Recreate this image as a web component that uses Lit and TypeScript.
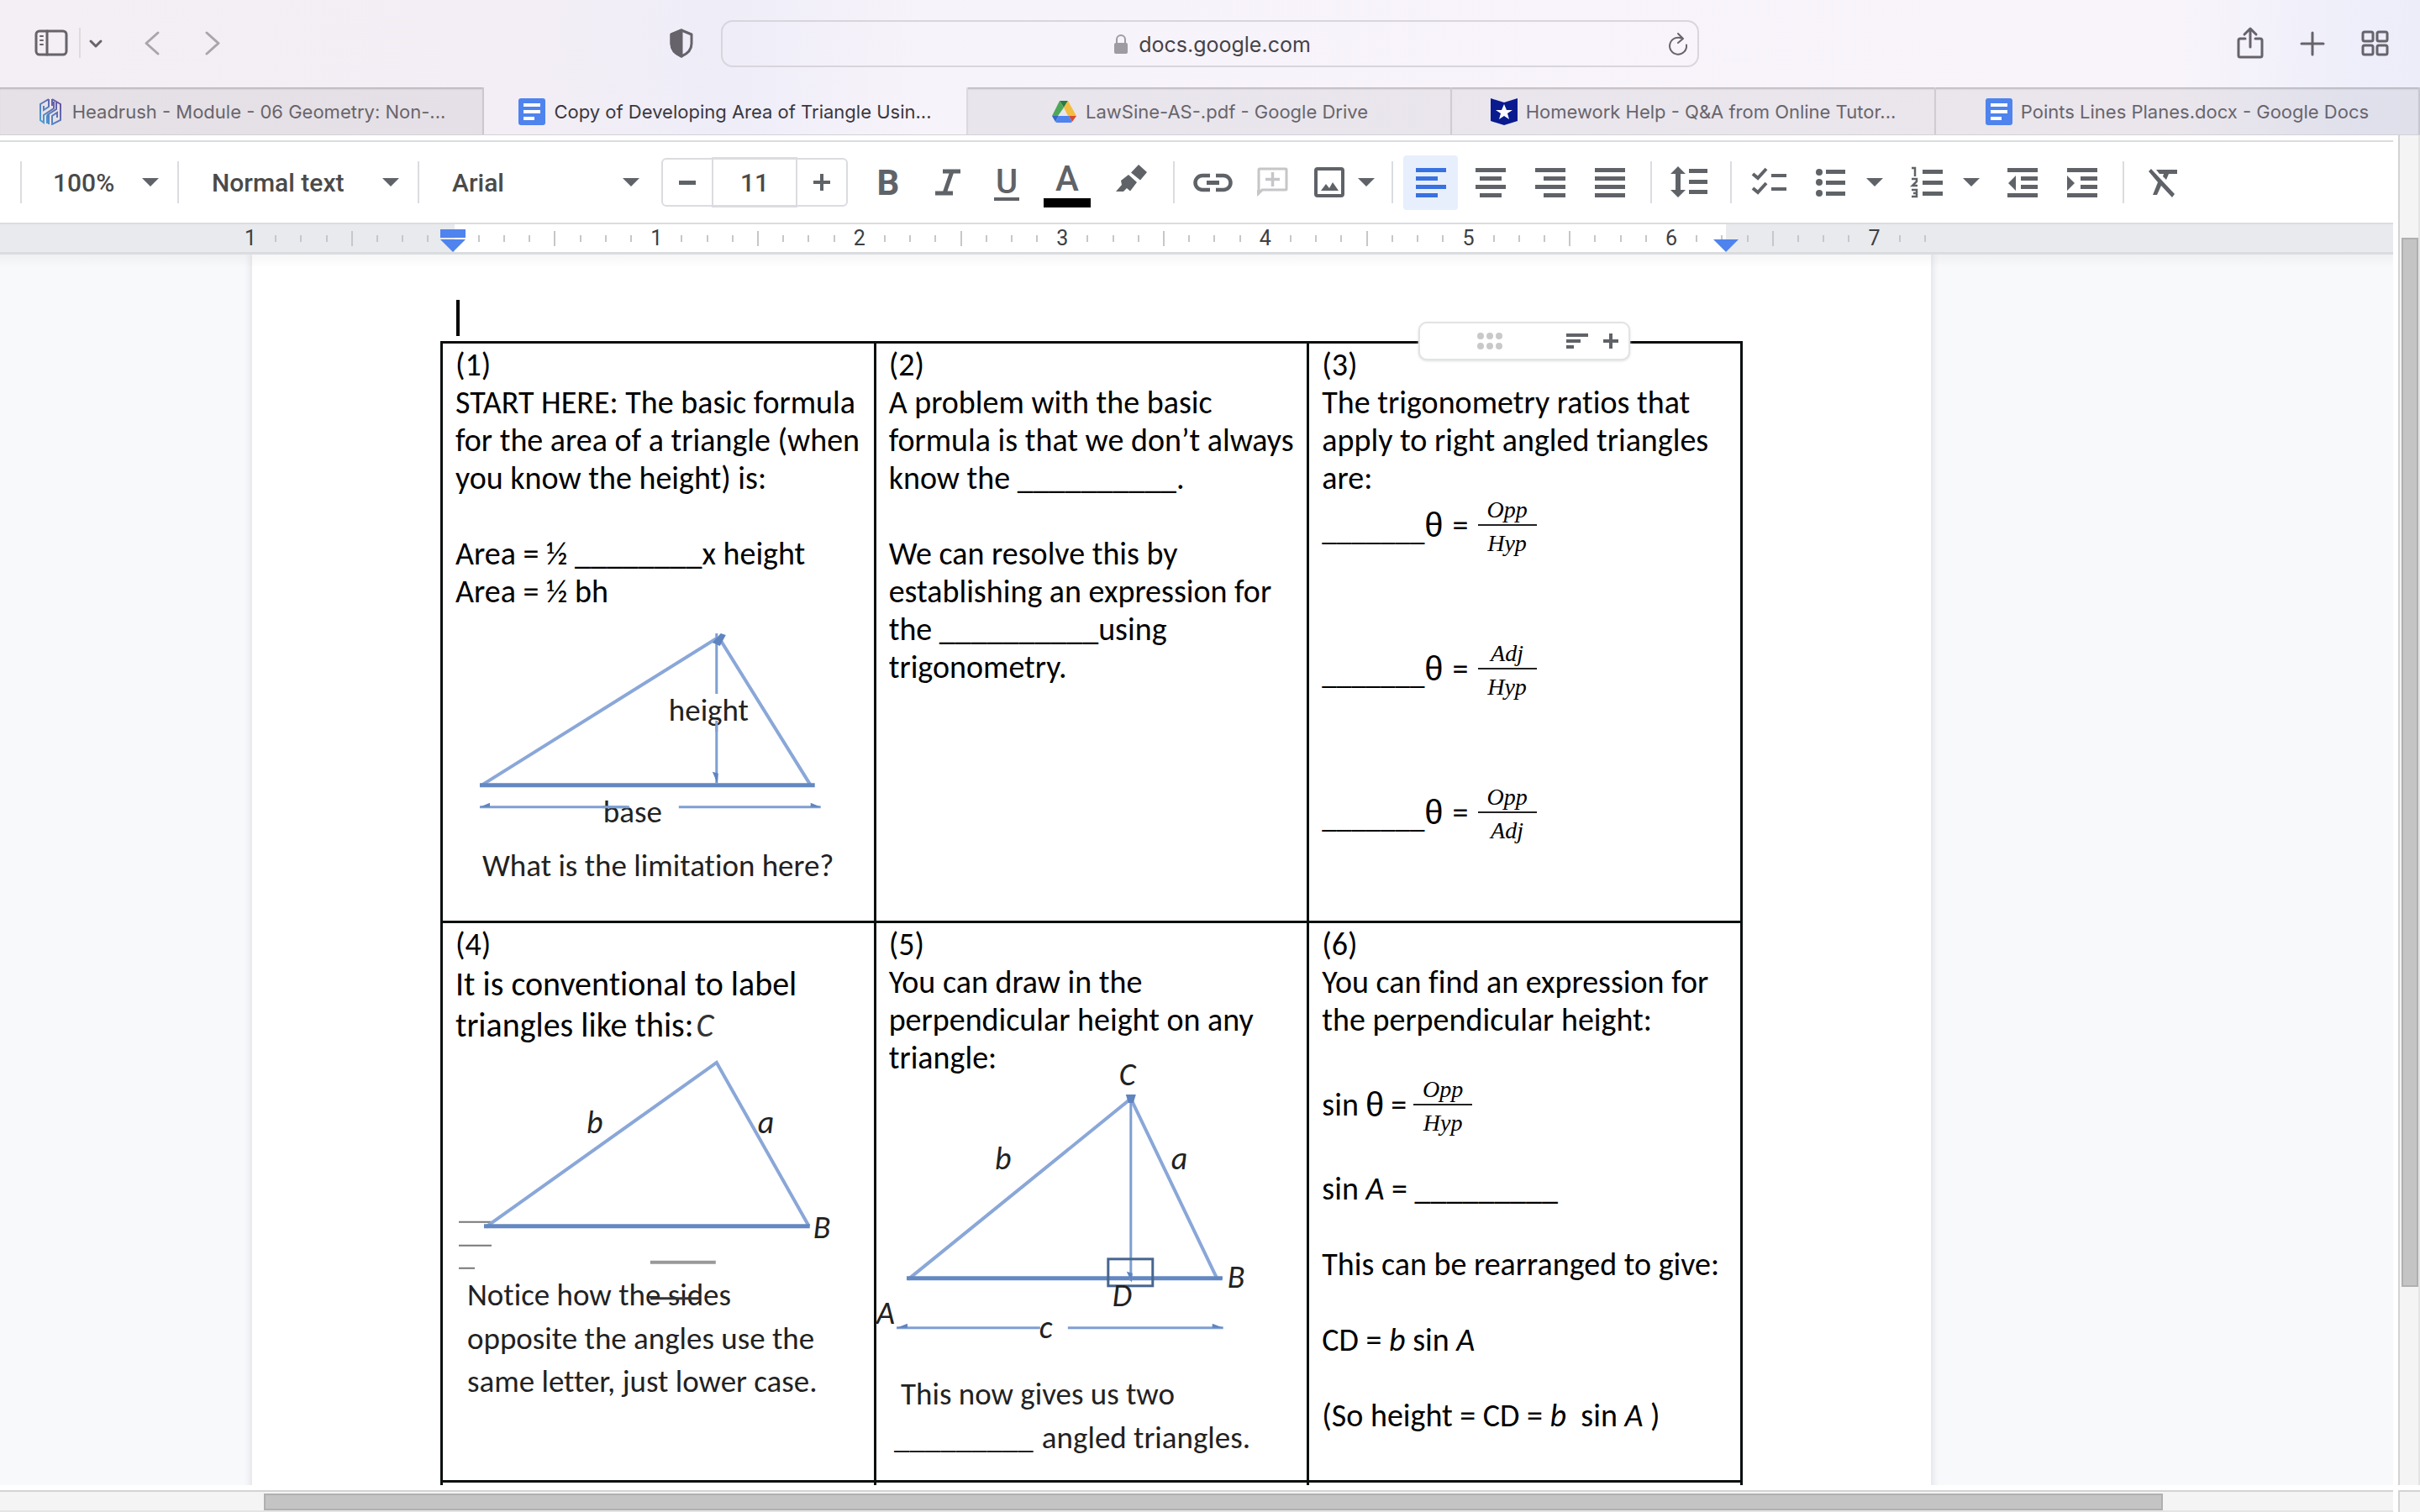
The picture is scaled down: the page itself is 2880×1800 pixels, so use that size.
import { LitElement, html, svg, css, nothing } from "lit";
import { customElement } from "lit/decorators.js";
import { classMap } from "lit/directives/class-map.js";

const docsIcon = svg`<rect width="32" height="32" rx="3" fill="#4f83ee"/><path d="M6 6h20v4H6zM6 14h20v4H6zM6 22h13v4H6z" fill="#fff"/>`;

const tabs = [
  {
    title: "Headrush - Module - 06 Geometry: Non-...",
    icon: svg`<defs><linearGradient id="hr" x1="1" y1="0" x2="0" y2="1"><stop offset="0" stop-color="#6a4c9c"/><stop offset="1" stop-color="#48a5dc"/></linearGradient></defs>
      <g fill="none" stroke="url(#hr)" stroke-width="2"><path d="M14 1L4 7V26L8 29V20L20 12V4M14 1V10L8 14V9M14 31V20L12 21V30M18 1V9M18 1L28 7V26L18 31V21L24 17V23M23 5V13L12 20"/></g>`,
  },
  { title: "Copy of Developing Area of Triangle Usin...", icon: docsIcon, active: true },
  {
    title: "LawSine-AS-.pdf - Google Drive",
    icon: svg`<path d="M11 3h10l-5 8z" fill="#2c7a3f"/><path d="M11 3l5 8-7 10H2z" fill="#4fa65b"/><path d="M21 3l10 18H21L16 11z" fill="#f3bd42"/><path d="M2 21h8l-4 7z" fill="#3367c8"/><path d="M22 21h9l-5 7z" fill="#d9492f"/><path d="M10 21h12l4 7q-1 1-2 1H8q-1 0-2-1z" fill="#4f83ee"/>`,
  },
  {
    title: "Homework Help - Q&A from Online Tutor...",
    icon: svg`<path d="M0 0l16 5L32 0v27l-16 5-16-5z" fill="#0a1a8f"/><path d="M16 7l3 7h7l-6 4 2 7-6-4-6 4 2-7-6-4h7z" fill="#fff"/>`,
  },
  { title: "Points Lines Planes.docx - Google Docs", icon: docsIcon },
];

const bars = (rows: number[][]) =>
  svg`${rows.map(([x, w], i) => svg`<rect x=${x} y=${7 + i * 10} width=${w} height="5"/>`)}`;

const icons: Record<string, unknown> = {
  minus: svg`<rect x="14" y="22" width="20" height="5"/>`,
  plus: svg`<rect x="14" y="22" width="20" height="4"/><rect x="22" y="14" width="4" height="20"/>`,
  bold: svg`<text x="23" y="39" font-size="42" font-weight="700" text-anchor="middle">B</text>`,
  italic: svg`<path d="M17 11H38M8 37H29M28 11L19 37" fill="none" stroke="currentColor" stroke-width="5"/>`,
  underline: svg`<text x="22" y="37" font-size="40" font-weight="500" text-anchor="middle">U</text><rect x="7" y="42" width="30" height="4"/>`,
  color: svg`<text x="23" y="34" font-size="42" font-weight="500" text-anchor="middle">A</text><rect x="-5" y="43" width="56" height="11" fill="#000"/>`,
  brush: svg`<path d="M37 3L47 12 39 21.500 28 12.500ZM25 15L35 24 27 34.500 23 31 19 35H10L17 27 16 22Z"/>`,
  link: svg`<path d="M21 16H12a8.500 8.500 0 0 0 0 17H21M28 16H37a8.500 8.500 0 0 1 0 17H28" fill="none" stroke="currentColor" stroke-width="4.500"/><rect x="17" y="22" width="15" height="5"/>`,
  comment: svg`<g color="#c4c6c8"><path d="M8 37V9Q8 8 9 8H40Q41 8 41 9V32Q41 33 40 33H12Z" fill="none" stroke="currentColor" stroke-width="3"/><path d="M6 41V33H14Z" fill="currentColor"/><path d="M16 20.500H33M24.500 12V29" stroke="currentColor" stroke-width="3.500"/></g>`,
  image: svg`<rect x="8" y="8" width="32" height="32" rx="2" fill="none" stroke="currentColor" stroke-width="4"/><path d="M14 34L20 26 24 31 28 24 35 34Z"/>`,
  left: bars([[6, 36], [6, 26], [6, 36], [6, 26]]),
  center: bars([[6, 36], [11, 26], [6, 36], [11, 26]]),
  right: bars([[6, 36], [16, 26], [6, 36], [16, 26]]),
  justify: bars([[6, 36], [6, 36], [6, 36], [6, 36]]),
  spacing: svg`<path d="M10 5L19 14H13V33H19L10 42 1 33H7V14H1Z"/><path d="M23 8H45v5H23zM23 21H45v5H23zM23 33H45v5H23z"/>`,
  checklist: svg`<path d="M4 14L10 19 20 8M4 31L10 36 20 25" fill="none" stroke="currentColor" stroke-width="4"/><path d="M26 14H44v4H26zM26 30H44v4H26z"/>`,
  bullets: svg`<circle cx="12" cy="12" r="4"/><circle cx="12" cy="24" r="4"/><circle cx="12" cy="37" r="4"/><path d="M20 9H43v5H20zM20 22H43v5H20zM20 35H43v5H20z"/>`,
  numbers: svg`<path d="M7 7H11V17M7 20H13V23L8 28H14M7 33H13V41H7M9 37H13" fill="none" stroke="currentColor" stroke-width="2.500"/><path d="M20 9H44v5H20zM20 22H44v5H20zM20 35H44v5H20z"/>`,
  outdent: svg`<path d="M6 7H42v5H6zM22 17H42v5H22zM22 27H42v5H22zM6 37H42v5H6zM16 16V34L7 25Z"/>`,
  indent: svg`<path d="M6 7H42v5H6zM22 17H42v5H22zM22 27H42v5H22zM6 37H42v5H6zM6 16V34L15 25Z"/>`,
  clear: svg`<path d="M17 9H42V14H32L29 21 25 17 26 14H21ZM8 11L11 8 39 38 36 42 23 28 18 39H13L19 24Z"/>`,
};

const icon = (name: string) => html`<svg class="icon" viewBox="0 0 48 48" aria-hidden="true">${icons[name]}</svg>`;
const caret = html`<svg class="caret" viewBox="0 0 20 10" aria-hidden="true"><path d="M0 0H20L10 10Z"/></svg>`;

const tool = (name: string, label: string, active = false) => html`
  <button class=${classMap({ tool: true, active })} aria-label=${label} aria-pressed=${active ? "true" : nothing}>${icon(name)}</button>`;
const split = (name: string, label: string, tight = false) => html`
  <span class=${classMap({ split: true, tight })}>
    ${tool(name, label)}<button class="more" aria-label="${label} options">${caret}</button>
  </span>`;
const picker = (label: string, value: string, cls: string) => html`
  <label class="picker ${cls}"><select aria-label=${label}><option>${value}</option></select>${caret}</label>`;
const sep = html`<span class="sep"></span>`;

const blank = (n: number) => html`<span>${"_".repeat(n)}</span>`;
const frac = (top: string, bottom: string) => html`<span class="frac"><i>${top}</i><i>${bottom}</i></span>`;
const ratio = (top: string, bottom: string) => html`
  <p class="ratio"><span class="short">_______</span><span class="theta">θ</span><span>=</span>${frac(top, bottom)}</p>`;

@customElement("app-ruler")
export class AppRuler extends LitElement {
  static styles = css`
    :host { display: block; position: relative; height: 33px; padding-left: 283px; border-bottom: 3px solid #dadce0;
      background: linear-gradient(90deg, #e8eaed 541px, #fff 541px 2054px, #e8eaed 2054px); }
    .scale { display: grid; grid-template-columns: repeat(67, minmax(0, 1fr)); width: 2023px; height: 33px; align-items: center; justify-items: center; }
    .tick { width: 2px; height: 8px; background: #c4c7cb; }
    .half { height: 18px; }
    .num { font: 25px/33px Roboto, sans-serif; color: #3c4043; }
    .mark { position: absolute; top: 6px; left: 524px; width: 30px; height: 27px; fill: #4f83ee; }
    .end { left: 2039px; }
  `;
  render() {
    return html`
      <div class="scale">
        ${Array.from({ length: 67 }, (_, i) =>
          i === 8
            ? html`<span></span>`
            : i % 8 === 0
              ? html`<span class="num">${Math.abs(i / 8 - 1)}</span>`
              : html`<span class=${classMap({ tick: true, half: i % 8 === 4 })}></span>`)}
      </div>
      <svg class="mark" viewBox="0 0 30 27"><path d="M0 0H30V10H0ZM0 12H30L15 27Z"/></svg>
      <svg class="mark end" viewBox="0 0 30 27"><path d="M0 12H30L15 27Z"/></svg>`;
  }
}

@customElement("app-toolbar")
export class AppToolbar extends LitElement {
  static styles = css`
    :host { display: flex; align-items: center; height: 96px; padding-left: 24px; border-top: 2px solid #dadce0; border-bottom: 2px solid #dadce0;
      background: #fff; color: #5f6368; font-family: Roboto, sans-serif; }
    button, select, input { font: inherit; color: inherit; border: 0; padding: 0; margin: 0; background: none; }
    .sep { flex: none; width: 2px; height: 50px; background: #dadce0; }
    .icon { display: block; width: 48px; height: 48px; overflow: visible; fill: currentColor; }
    .caret { display: block; flex: none; width: 20px; height: 10px; fill: currentColor; }
    .picker { display: flex; align-items: center; flex: none; width: 284px; box-sizing: border-box; padding: 0 22px 0 39px; font-size: 30px; font-weight: 500; color: #4a4a4a; }
    .picker.zoom { width: 185px; padding-left: 37px; }
    .picker select { appearance: none; flex: 1; min-width: 0; height: 60px; outline: 0; }
    .picker .caret { color: #5f6368; }
    .size { display: flex; align-items: center; flex: none; margin: 0 16px 0 4px; border: 2px solid #dadce0; border-radius: 6px; height: 54px; }
    .size button { width: 58px; display: grid; place-items: center; }
    .size input { width: 98px; height: 56px; border: 2px solid #dadce0; text-align: center; font-size: 30px; font-weight: 500; color: #4a4a4a; }
    .group { display: flex; flex: none; gap: 6px; padding: 0 16px 0 12px; }
    .text { padding: 0 22px 0 0; }
    .tool { display: grid; place-items: center; width: 65px; height: 65px; border-radius: 4px; }
    .active { background: #e7effd; color: #3871e0; }
    .split { display: flex; align-items: center; }
    .more { display: grid; place-items: center; width: 44px; height: 65px; }
    .tight .tool { width: 60px; }
    .tight .more { width: 28px; }
  `;
  render() {
    return html`
      ${sep}${picker("Zoom", "100%", "zoom")}
      ${sep}${picker("Styles", "Normal text", "")}
      ${sep}${picker("Font", "Arial", "")}
      <div class="size">
        <button aria-label="Decrease font size">${icon("minus")}</button>
        <input aria-label="Font size" value="11">
        <button aria-label="Increase font size">${icon("plus")}</button>
      </div>
      <div class="group text">
        ${tool("bold", "Bold")}${tool("italic", "Italic")}${tool("underline", "Underline")}${tool("color", "Text color")}${tool("brush", "Highlight color")}
      </div>
      ${sep}
      <div class="group">${tool("link", "Insert link")}${tool("comment", "Add comment")}${split("image", "Insert image", true)}</div>
      ${sep}
      <div class="group">${tool("left", "Left align", true)}${tool("center", "Center align")}${tool("right", "Right align")}${tool("justify", "Justify")}</div>
      ${sep}
      <div class="group">${tool("spacing", "Line spacing")}</div>
      ${sep}
      <div class="group">
        ${tool("checklist", "Checklist")}${split("bullets", "Bulleted list")}${split("numbers", "Numbered list")}${tool("outdent", "Decrease indent")}${tool("indent", "Increase indent")}
      </div>
      ${sep}
      <div class="group">${tool("clear", "Clear formatting")}</div>`;
  }
}

@customElement("app-worksheet")
export class AppWorksheet extends LitElement {
  static styles = css`
    :host { display: block; box-sizing: border-box; max-width: 1998px; min-height: 100%; margin-left: 300px; padding: 54px 224px 0 224px; background: #fff;
      box-shadow: 0 0 8px 2px #dfe1e5; font: 38px/45px Carlito, Calibri, Lato, sans-serif; font-variant-ligatures: none; color: #000; }
    .line { height: 45px; padding-left: 19px; margin-bottom: 4px; }
    .cursor { display: block; width: 4px; height: 43px; background: #000; }
    .frame { position: relative; }
    table { width: 100%; table-layout: fixed; border-collapse: collapse; }
    td { vertical-align: top; border: 3px solid #0b0f0f; padding: 3px 0 0 15px; }
    .upper { height: 690px; }
    .lower { height: 666px; }
    p { margin: 0; min-height: 45px; white-space: nowrap; }
    .loose { font-size: 40px; line-height: 49px; }
    .ratio { display: flex; align-items: center; height: 66px; margin-bottom: 105px; }
    .ratio:last-child { margin-bottom: 0; }
    .ratio > span { margin-right: 11px; }
    .ratio > .short { font-size: 35px; margin: 0; padding-top: 12px; }
    .sine { margin-bottom: 0; }
    .sine > span { margin-right: 8px; }
    .theta { font: 40px/45px "Liberation Sans", sans-serif; }
    .frac { display: inline-flex; flex-direction: column; align-items: center; font: 28px/42px "Liberation Serif", serif; }
    .frac i { width: 70px; height: 34px; text-align: center; }
    .frac i:first-child { border-bottom: 2px solid #222; line-height: 34px; }
    .corner { color: #333; margin-left: 3px; }
    .figure { display: block; width: 100%; overflow: visible; fill: #222; font-size: 37px; }
    .side { fill: none; stroke: #8aa7d8; stroke-width: 4; }
    .base { fill: none; stroke: #6488c1; stroke-width: 5; }
    .thin { fill: none; stroke: #7e9fd2; stroke-width: 3; }
    .tip { fill: #5f84c0; }
    .square { fill: none; stroke: #46668f; stroke-width: 3; }
    .rule { fill: none; stroke: #777; stroke-width: 2; }
    .thick { stroke-width: 4; stroke: #999; }
    .strike { stroke: #333; stroke-width: 3; }
    .v { font-style: italic; font-size: 38px; }
    .columns { position: absolute; top: -23px; left: 1164px; display: flex; align-items: center; box-sizing: border-box; width: 252px; height: 46px; padding: 0 5px 0 67px;
      border: 2px solid #e2e3e5; border-radius: 10px; background: #fff; box-shadow: 0 1px 3px #ddd; }
    .columns button { border: 0; padding: 0; background: none; display: block; height: 32px; }
    .columns svg { display: block; width: 32px; height: 32px; fill: #5f6368; }
    .grip { margin-right: auto; }
    .columns .grip svg { fill: #c9c9c9; }
    .columns button + button + button { margin-left: 8px; }
  `;
  render() {
    return html`
      <div class="line"><span class="cursor"></span></div>
      <div class="frame">
        <table>
          <tbody>
            <tr class="upper">
              <td>
                <p>(1)</p>
                <p>START HERE: The basic formula</p><p>for the area of a triangle (when</p><p>you know the height) is:</p><p></p>
                <p>Area = ½ ${blank(8)}x height</p><p>Area = ½ bh</p>
                <svg class="figure" viewBox="541 726 498 362" role="img" aria-label="Triangle with base and height">
                  <path class="side" d="M572 934L852 759M856 760L964 934"/>
                  <path class="base" d="M570 934H969"/>
                  <path class="thin" d="M852 753V825M852 863V932M570 960H745M807 960H976"/>
                  <path class="tip" d="M847 764L857 753 863 755 856 768ZM847 918L854 920 853 932ZM570 960L582 955V960ZM976 960L964 955V960Z"/>
                  <text x="795" y="857">height</text>
                  <path class="thin" d="M852 857V870"/>
                  <text x="717" y="978">base</text>
                  <path class="thin" d="M716 960H748"/>
                  <text x="573" y="1042">What is the limitation here?</text>
                </svg>
              </td>
              <td>
                <p>(2)</p>
                <p>A problem with the basic</p><p>formula is that we don’t always</p><p>know the ${blank(10)}.</p><p></p>
                <p>We can resolve this by</p><p>establishing an expression for</p><p>the ${blank(10)}using</p><p>trigonometry.</p>
              </td>
              <td>
                <p>(3)</p>
                <p>The trigonometry ratios that</p><p>apply to right angled triangles</p><p>are:</p>
                ${ratio("Opp", "Hyp")}${ratio("Adj", "Hyp")}${ratio("Opp", "Adj")}
              </td>
            </tr>
            <tr class="lower">
              <td>
                <p>(4)</p>
                <p class="loose">It is conventional to label</p><p class="loose">triangles like this:<i class="corner">C</i></p>
                <svg class="figure" viewBox="541 1245 498 510" role="img" aria-label="Triangle with sides and angles labelled">
                  <path class="rule" d="M545 1455H584M545 1483H584M545 1510H564"/>
                  <path class="rule thick" d="M773 1503H851"/>
                  <path class="side" d="M577 1461L852 1265 962 1460"/>
                  <path class="base" d="M575 1460H963"/>
                  <text class="v" x="697" y="1349">b</text>
                  <text class="v" x="901" y="1349">a</text>
                  <text class="v" x="967" y="1474">B</text>
                  <text x="555" y="1554">Notice how the sides</text>
                  <path class="strike" d="M773 1546H831"/>
                  <text x="555" y="1606">opposite the angles use the</text>
                  <text x="555" y="1657">same letter, just lower case.</text>
                </svg>
              </td>
              <td>
                <p>(5)</p>
                <p>You can draw in the</p><p>perpendicular height on any</p><p>triangle:</p>
                <svg class="figure" viewBox="1057 1281 498 474" role="img" aria-label="Triangle split by a perpendicular height">
                  <path class="side" d="M1080 1522L1345 1307 1448 1522"/>
                  <path class="base" d="M1078 1521H1454"/>
                  <path class="thin" d="M1345 1304V1524M1066 1580H1237M1270 1580H1455"/>
                  <path class="tip" d="M1339 1302H1351L1348 1312H1342ZM1340 1513L1347 1515 1346 1526ZM1066 1580L1079 1575V1580ZM1455 1580L1442 1575V1580ZM1442 1522L1454 1519V1522Z"/>
                  <rect class="square" x="1318" y="1498" width="53" height="32"/>
                  <text class="v" x="1331" y="1291">C</text>
                  <text class="v" x="1183" y="1391">b</text>
                  <text class="v" x="1393" y="1391">a</text>
                  <text class="v" x="1460" y="1532">B</text>
                  <text class="v" x="1323" y="1554">D</text>
                  <text class="v" x="1042" y="1575">A</text>
                  <text class="v" x="1236" y="1592">c</text>
                  <text x="1071" y="1671">This now gives us two</text>
                  <text x="1063" y="1723">_________</text>
                  <text x="1239" y="1723">angled triangles.</text>
                </svg>
              </td>
              <td>
                <p>(6)</p>
                <p>You can find an expression for</p><p>the perpendicular height:</p><p></p>
                <p class="ratio sine"><span>sin</span><span class="theta">θ</span><span>=</span>${frac("Opp", "Hyp")}</p><p></p>
                <p>sin <i>A</i> = ${blank(9)}</p><p></p>
                <p>This can be rearranged to give:</p><p></p>
                <p>CD = <i>b</i> sin <i>A</i></p><p></p>
                <p>(So height = CD = <i>b</i>&nbsp; sin <i>A</i> )</p>
              </td>
            </tr>
            <tr class="lower"><td></td><td></td><td></td></tr>
          </tbody>
        </table>
        <div class="columns">
          <button class="grip" aria-label="Move column"><svg viewBox="0 0 32 32">${[5, 16, 27].map((x) => svg`<circle cx=${x} cy="10" r="4"/><circle cx=${x} cy="22" r="4"/>`)}</svg></button>
          <button aria-label="Sort"><svg viewBox="0 0 32 32"><path d="M3 7H29v4H3zM3 14H20v4H3zM3 21H12v4H3z"/></svg></button>
          <button aria-label="Insert column"><svg viewBox="0 0 32 32"><path d="M7 14H25v4H7zM14 7H18V25H14z"/></svg></button>
        </div>
      </div>`;
  }
}

@customElement("app-root")
export class AppRoot extends LitElement {
  static styles = css`
    :host { display: flex; flex-direction: column; height: 100vh; overflow: hidden; background: #fff; font-family: Inter, "Liberation Sans", sans-serif; }
    button { border: 0; padding: 0; margin: 0; background: none; color: inherit; font: inherit; }
    svg { display: block; }
    .chrome { flex: none; background: linear-gradient(90deg, #f4eff4 0%, #f3eef5 22%, #eeedf8 30%, #f7f3fa 38%, #f8f4fa 90%, #edeefa 98%, #ecedf8 100%); border-bottom: 1px solid #d3d1d6; }
    .bar { display: grid; grid-template-columns: 1fr 1164px 1fr; align-items: center; height: 104px; color: #66636b; }
    .nav, .actions { display: flex; align-items: center; }
    .nav { padding: 0 27px 2px 40px; }
    .nav svg, .actions svg, .reload svg { width: 40px; height: 40px; overflow: visible; fill: none; stroke: currentColor; stroke-width: 3; stroke-linecap: round; stroke-linejoin: round; }
    .divider { width: 2px; height: 36px; margin: 0 0 0 14px; background: #dedade; }
    .menu { margin: 0 28px 0 -2px; }
    .pale { color: #a9a5ad; }
    .pale + .pale { margin-left: 32px; }
    .shield { margin-left: auto; }
    .address { display: flex; align-items: center; box-sizing: border-box; height: 56px; border: 2px solid #d9d5dc; border-radius: 14px; padding: 2px 3px 0 48px; }
    .host { flex: 1; display: flex; align-items: center; justify-content: center; gap: 12px; font-size: 25px; line-height: 32px; color: #454348; }
    .host svg { width: 18px; height: 24px; }
    .actions { justify-content: flex-end; gap: 34px; padding-right: 34px; }
    .tabs { display: grid; grid-template-columns: repeat(5, minmax(0, 1fr)); height: 56px; }
    .tab { display: flex; align-items: center; justify-content: center; gap: 10px; box-sizing: border-box; font-size: 22px; line-height: 28px; color: #68656c;
      text-decoration: none; white-space: nowrap; background: #0000000e; border-right: 2px solid #0000001c; box-shadow: inset 0 3px 2px -1px #00000030; padding-top: 2px; }
    .tab svg { width: 32px; height: 32px; flex: none; }
    .tab.active { background: none; box-shadow: none; color: #3a383e; }
    .work { flex: 1; min-height: 0; display: grid; grid-template: minmax(0, 1fr) 26px / minmax(0, 1fr) 26px; gap: 6px; }
    .editor { display: flex; flex-direction: column; min-width: 0; min-height: 0; padding-top: 6px; }
    .canvas { flex: 1; min-height: 0; overflow: hidden; background: #f8f9fb; position: relative; }
    .canvas::before { content: ""; position: absolute; z-index: 1; inset: 0 0 auto 0; height: 16px; background: linear-gradient(#00000009, #00000000); }
    .track { display: flex; box-sizing: border-box; background: #f4f4f4; }
    .vertical { flex-direction: column; border-left: 2px solid #d3d3d3; border-right: 2px solid #e4e4e4; padding: 122px 0 236px 2px; }
    .horizontal { border-top: 2px solid #d3d3d3; border-bottom: 2px solid #e4e4e4; padding: 2px 274px 0 314px; }
    .thumb { flex: 1; background: #c4c4c4; box-shadow: inset 0 0 0 2px #b0b0b0; }
    .cornerbox { border-top: 2px solid #d3d3d3; border-left: 2px solid #d3d3d3; background: #f4f4f4; }
  `;
  render() {
    return html`
      <header class="chrome">
        <div class="bar">
          <div class="nav">
            <button aria-label="Show sidebar"><svg viewBox="0 0 40 40"><rect x="3" y="6" width="36" height="28" rx="4"/><path d="M16 6V34"/><path d="M8 12H11M8 17H11M8 22H11" stroke-width="2"/></svg></button>
            <span class="divider"></span>
            <button class="menu" aria-label="Tab groups"><svg viewBox="0 0 40 40"><path d="M14 18L20 24 26 18"/></svg></button>
            <button class="pale" aria-label="Back"><svg viewBox="0 0 40 40"><path d="M26 8L12 20.500 26 33"/></svg></button>
            <button class="pale" aria-label="Forward"><svg viewBox="0 0 40 40"><path d="M12 8L26 20.500 12 33"/></svg></button>
            <button class="shield" aria-label="Privacy report"><svg viewBox="0 0 40 40"><path d="M20 5L32 10V21Q32 31 20 36Q8 31 8 21V10Z"/><path d="M20 5V36Q8 31 8 21V10Z" fill="currentColor"/></svg></button>
          </div>
          <div class="address">
            <span class="host"><svg viewBox="0 0 18 24"><rect x="1" y="10" width="16" height="13" rx="2" fill="#9f9ba3"/><path d="M4 11V6a5 5 0 0 1 10 0V11" fill="none" stroke="#9f9ba3" stroke-width="2"/></svg>docs.google.com</span>
            <button class="reload" aria-label="Reload"><svg viewBox="0 0 40 40"><path d="M25 13A10 10 0 1 0 30 20.500M20 7L26 13 20 18" stroke-width="2"/></svg></button>
          </div>
          <div class="actions">
            <button aria-label="Share"><svg viewBox="0 0 40 40"><path d="M14 14H8Q6 14 6 16V34Q6 36 8 36H32Q34 36 34 34V16Q34 14 32 14H26M20 24V2M13 9L20 2 27 9"/></svg></button>
            <button aria-label="New tab"><svg viewBox="0 0 40 40"><path d="M7 20H33M20 7V33"/></svg></button>
            <button aria-label="Tab overview"><svg viewBox="0 0 40 40"><rect x="6" y="6" width="12" height="11" rx="2"/><rect x="23" y="6" width="12" height="11" rx="2"/><rect x="6" y="22" width="12" height="11" rx="2"/><rect x="23" y="22" width="12" height="11" rx="2"/></svg></button>
          </div>
        </div>
        <nav class="tabs">
          ${tabs.map((t) => html`<a href="#" class=${classMap({ tab: true, active: !!t.active })}><svg viewBox="0 0 32 32">${t.icon}</svg>${t.title}</a>`)}
        </nav>
      </header>
      <main class="work">
        <div class="editor">
          <app-toolbar></app-toolbar>
          <app-ruler></app-ruler>
          <div class="canvas"><app-worksheet></app-worksheet></div>
        </div>
        <div class="track vertical"><div class="thumb"></div></div>
        <div class="track horizontal"><div class="thumb"></div></div>
        <div class="cornerbox"></div>
      </main>`;
  }
}
